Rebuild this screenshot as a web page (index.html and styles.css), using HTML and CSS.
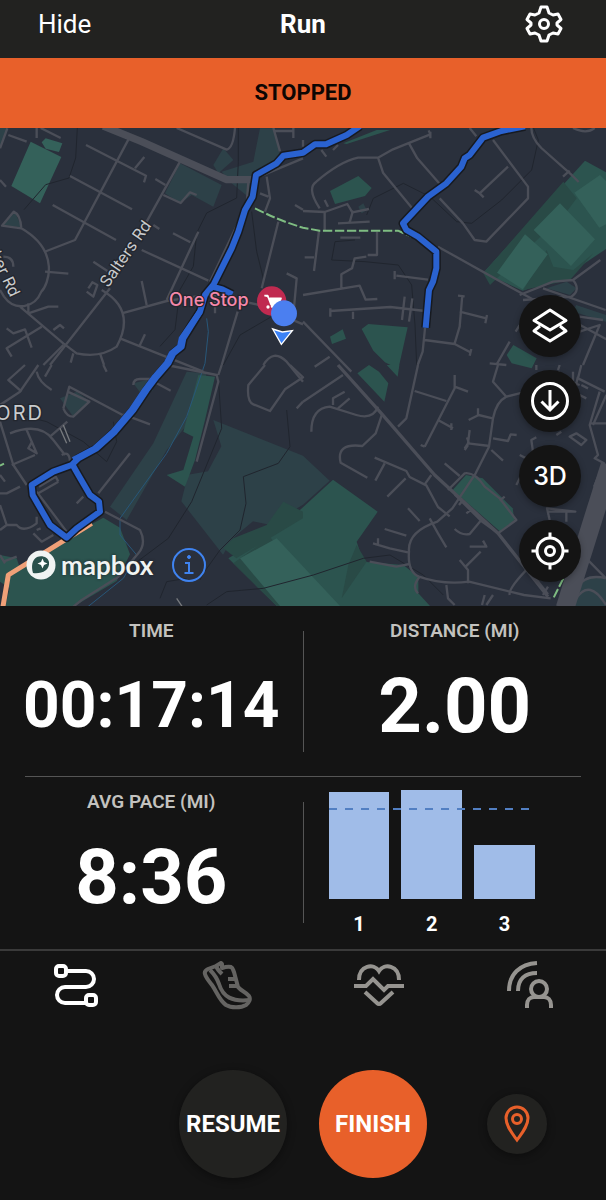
FILE: index.html
```
<!DOCTYPE html>
<html lang="en">
<head>
    <meta charset="UTF-8">
    <meta name="viewport" content="width=device-width, initial-scale=1.0">
    <title>Run</title>
    <link rel="stylesheet" href="styles.css">
</head>
<body>
    <header class="top-bar">
        <button type="button" class="hide-btn">Hide</button>
        <h1>Run</h1>
        <button type="button" class="settings-btn" aria-label="Settings">
            <svg width="48" height="44" viewBox="0 0 48 44" fill="none" stroke="#fff" stroke-width="3" stroke-linejoin="round">
                <path d="M21 5h6l2 6 4 2 5-1 3 5.500-4 3.500v2l4 3.500-3 5.500-5-1-4 2-2 6h-6l-2-6-4-2-5 1-3-5.500 4-3.500v-2l-4-3.500 3-5.500 5 1 4-2z"/>
                <circle cx="24" cy="22" r="4.500"/>
            </svg>
        </button>
    </header>

    <div class="status">STOPPED</div>

    <main class="map">
        <svg class="map-canvas" viewBox="0 9 1818 1434" preserveAspectRatio="xMidYMid slice">
            <!-- parks -->
            <g class="woods">
                <path d="M540 115l125 65-25 65-65-35-35 25-45-30zM640 120l30-50 30 35-45 40zM665 140l95-30 20-100h45l15 80-80 70-10 60-55-45z"/>
                <path d="M0 9h25L0 70zM10 300l35-38 20 45zM560 740l60 5-40 130-80 100-120 210-50-40 130-190z"/>
                <path d="M640 885l269 107 80 75-80 72-100 60-50-10-60 50-30 50-125-160 20-80 60-10 40-75z"/>
                <path d="M180 820l50-20 40 30-50 45zM400 775l40-10 20 30-30 20zM1075 245l15-10 10 20-15 10zM1640 490l60-20 30 20-20 20zM1720 560l98 30v-20l-90-30zM1700 1443l30-70 40-20 48 10v80z"/>
            </g>
            <g class="park">
                <path d="M990 198l85-45 40 36-20 24-90 24zM1085 612l20-15 118 10-28 125-40-20-35-35zM990 635l38-22 10 28-42 16zM1030 55l100-40h40l-130 42z"/>
                <path d="M1755 107l63 35v230l-120 80-130 45-118-54z"/>
                <path d="M1520 690l20-30 70 40-15 30-60-15zM1072 745l35-25 30 20 28 35-12 55zM1160 720h38l-5 35z"/>
                <path d="M1358 1095l40-45 50 10 90 90 5 35-42 35z"/>
                <path d="M595 750l50 5-30 130-30 120-30 80-55-35 50-15 30-100-30-15z"/>
                <path d="M0 1290l50 10 10 30-30 60-30-20zM60 1330l140-92 110-60 50 30 30 80-40 80-135 80H15l20-85z"/>
                <path d="M685 1300l155-90 159-146 134 96-63 90 20 60 120 10 45 35 0 50 35 38H830z"/>
            </g>
            <g class="trees">
                <path d="M670 1270l30-30 100-40 50-70 59 30v20l-200 120zM1045 1320l25-60 30 50-75 110zM700 1315l110-80 160 208H830z"/>
                <path d="M1690 170l40 50-30 40-230 220-20-35zM1640 375l20 50 60 10 60-50-70 80-140 30z"/>
            </g>
            <g class="pitch">
                <path d="M92 50l92 46-64 139-86-52zM125 52l12-12 50 15-10 26-40-10z"/>
                <path d="M1575 328l68 60-75 105-77-50zM1680 235l105 108-72 80-112-108zM1800 150l18 18v130l-20 10-75-105z"/>
                <path d="M720 1300l110-60 190 203H840z"/>
            </g>

            <!-- paths and streams -->
            <g class="trail">
                <path d="M232 9l-5 90-20 60-70 20-65 75M715 9l0 100-5 110-90 45-30 60-10 100-40 70-15 120-45 50M755 260l15 120 20 80M840 560l-120 70-50 90M1100 270l20-50 90-45 80 40 80 75 45 5 90-70 90-90 20-90-30-75M1065 345l-60 5-10 55 100 5 100 10 40 60 10 120 5 120"/>
                <path d="M860 855l10 110-35 50-105 40 8 80-18 80-60 60-50 70-10 20M655 760l10 150-90 220-70 110-160 120M480 1420l20-50 60-10M620 1440l60-40 110-10 150-40 150-50 80-10 100 60 60 60M60 870l80 20 110 60 70 60 30-60-10-60"/>
            </g>
            <path class="stream" d="M620 580l5 40-10 95-55 160-60 110-140 195 0 50 50 60-40 70-150 120"/>

            <!-- north west -->
            <g class="road">
                <path d="M387 40L225 345l-93 36M540 110L440 290M330 490L150 720M258 60l180 92-6 20M405 130l28-34M210 153l186 100M158 240l190 105M466 162l30 18M490 210l52 24 28-32 20 8M460 300l18 12M425 375l200 92M519 325l52 27M595 320l-95 205M280 410l42 28"/>
                <path d="M64 310c120 70 80 170 60 190-20 50-80 60-112 15L0 495M64 310l-58-8 35-42q20 8 23 50M135 440l70 6M60 545l130 110 40 30q70 15 120-20 60-110-45-170M365 565l135-37 130-20 140 30 139 60M360 640l250 100M440 540l-15-72M435 628l-18 38M300 685l12 35M220 685l-8 28M190 660l-60 60M125 605L20 670l15 25M20 610l20 15 35-12 20 55M85 565l60-20h30M160 615l20-15 12 10M260 500l20 15 12-35-15-8-12 18M85 535v30"/>
                <path d="M25 30l55 20M0 70l22-60M0 165l18 20M110 9v30M122 9l60 30M10 395q30 0 30 30M530 9l150 65q20-5 25-65M820 9l20 70M800 155l10 65-15 40M745 170L740 240 630 470M880 9v30M820 18h60M885 240l24 14M835 290L785 490M860 445l30 15-10 110M713 560L665 720M645 530v35M780 205l25 10M790 720q30-50 70-10l49 60"/>
            </g>
            <path class="road main" d="M310 3L425 50l255 114h85"/>
            <path class="road" d="M765 160l144-60"/>

            <!-- north east -->
            <g class="road" transform="translate(909 0)">
                <path d="M0 258l65 3 68-24 15 25 50-10M50 250Q10 190 40 170 110 110 165 98l60 0 45-25 112-45-5-12M382 20v20M225 98l15 45 90 110M318 55l25 45 70 80M410 220l70 75 35 50 35 5 125-130v-35L570 45M615 125l-85 80-15-10M530 205l12 12M500 9l20 25M685 9q0 30 30 60l90 80 22 22M780 155l20-18"/>
                <path d="M405 365l215 120 290 158M65 260v55M48 318l-15 120M5 397h28M105 295l95-5M140 292l10-35M65 225l10 20M112 338h60M222 320v70h-28M190 395l-35 5-8 30-32 18v45M0 510l170-28 18 42 35-2M280 452l95 12M275 438v25M82 558l180-12 105 12M82 550v25M150 560v22M305 515l-8 70M328 520l-10 70M478 510l-8 95-15 50M465 512l20 2M470 560l80 20M552 570l-5 25M365 645l90 12 47 25M505 672l-5 20M367 600l-8 80-15 40"/>
                <path d="M0 590l145 150M80 695l-45 30M0 45v20M105 60l-15 15M55 75l15 20M650 510l100-40 60-5 82-60M720 490l188 65M810 465q25 30-5 50L660 525M810 9q40 20 65 0M830 575l70 10M620 650l-40 70M560 715l50 5M650 600l-12 20M830 620l60-20-50 120"/>
            </g>

            <!-- south west -->
            <g class="road" transform="translate(0 720)">
                <path d="M115 0L60 80 0 120M65 80L25 45 75 0M0 170l40 130 40 60M30 205q90-35 130 20l35 45M80 195l30 70-25-15 10-18M150 215l52-45M35 300l70-30M0 330l15 20M0 385h20l40-20M110 20q5 30 45 55M155 0l-20 35M310 0l10 20M190 130l18-65 160 85 0 0M190 130q10 25 30 25l48-45-65-30M370 148l80 30M470 55l42 22M400 60q0-18 20-18h40M390 265l-95 120M250 395l-20 20M500 0l150 30 5 20-65 240M655 30l10-30"/>
                <path d="M315 440l105 55q20 40-5 70l-60 70-110 70-25 20M110 380l90 120M175 350l-60 35M175 350l-8-15-50 30M0 420l20 60-20 15M20 480l30 0q20 25 60-5v-20M100 505l25 25 35-20M0 570l15 25M10 590l40-15M110 495l12-5M185 270q25-15 25 25"/>
                <path d="M795 0l-50 60q-5 50 15 58l50 20 45-65 54-36L870 0M890 130l19-20"/>
            </g>
            <path class="footway" d="M180 910l20 45M190 900l20 50M530 1420l20 30"/>
            <path class="a-road" d="M275 1195L25 1350 8 1450"/>

            <!-- south east -->
            <g class="road" transform="translate(909 720)">
                <path class="wide" d="M105 0l130 145 160 185 190 175 150 190"/>
                <path d="M345 0l-35 160-25 25M335 78l95 30M455 30l0 40-90 175M365 245l-12-5M455 65l40 15M405 165l45 25M445 175v20M585 0l-15 50 40 45q-30 15-40 65l-12 85-40 80-70 105-45 40q-90 30-85 90-5 60 30 75 70 25 150 15l165 40 80 10"/>
                <path d="M610 95l60-15M497 165l30-15 42 10M525 130v22M485 250l12-18-5-15M500 195l-5 40 65 8M495 240l-10 15M570 220l45 8 8-20 18 2M565 255l35 32M425 295l45 38M385 330l-20 28M215 278l95 40 10 18 50 25 35 65 35 28M245 295l-28 52M308 340l-55 55M435 375l50-50q30-5 60 40l45 35 50 65-55 40M455 388l80 80 55 40M480 405l-12 15M510 430l-20 15M535 465l-35 42q-25 5-45-15M605 395l-15 12"/>
                <path d="M0 110L120 30M25 200q0-70 55-75l80 25q50 15 65-25M90 120v-20l35-20M105 130l35-30M238 145l-20 60-40 38q-80-10-65 50l80 45M315 430l35 38M380 460l25 45 25 42M245 492l65 20M210 535l50 15 55 12M225 520v20M200 590l80 15 40-8M495 655v-40l-25-30M488 605l45-45M500 545l50 0-10-18M430 660l5 40 20 20M350 635q-25 30-5 50M570 690l-20 30M545 690l-8 30M620 690q-5-20 60-85M690 630l45 58M720 690l15-25"/>
                <path d="M700 0v15M770 0l-5 15M835 0l-10 40 80 40M890 80l-30 100 25 90-10 10 28 15-30 70M910 90l-40 90M860 175h49M800 215l20-10 30 20-15 15zM800 50l30 10M640 360l20-40M690 260l-5-35 15-8M740 465l-8-35 85 10-80 0M790 440v30M650 270l20 10M820 700q40-60 89 20M810 700q20-80 99-60M850 580l59 60M760 210l15-10"/>
                <path d="M730 60q10-30 40-40M810 20v100M825 35l-15 60M835 60l20 10M830 90l20 10"/>
            </g>
            <path class="road motorway" d="M1830 1020l-135 430"/>
            <path class="cycle" d="M765 250q80 40 144 58l50 9h235l40 18M0 1022l12-6M1690 1360l-30 60"/>

            <!-- recorded route, dark edge first and blue line over it -->
            <g class="route">
                <path id="route" d="M1080 3l-40 27-62 28h-33l-36 25-59 9-20 23-62 35-10 65-23 40-20 65-20 50-55 110-25 30-15 50-25 40-25 40-5 25-25 20-15 30-35 40-30 40-40 60-55 65-55 50-55 30-20 20-55 20-65 40 3 30 52 90 50 38 30-28 70-50-3-30-27-20-35-60-20-35M637 485l30 8 30 15M1575 4l-71 14-55 20-40 52-15 10-10 25-45 50-55 40-75 80 10 20 35 20 55 45v50l-10 40-12 25-10 113"/>
            </g>
            <use href="#route" class="route-line"/>
            <!-- stretch that was run twice -->
            <path class="route-line" d="M600 560l-55 80-5 25-25 20-15 30-35 40-30 40-40 60-55 65-55 50-65 35" />

            <g class="place">
                <text x="324" y="490" transform="rotate(-55 324 490)">Salters Rd</text>
                <text x="-30" y="388" transform="rotate(65 -30 388)">ker Rd</text>
                <text class="district" x="-14" y="886">ORD</text>
                <text class="shop" x="507" y="543">One Stop</text>
            </g>

            <circle cx="815" cy="528" r="44" fill="#c02a50"/>
            <path d="M793 512h10l10 26h22l8-18h-34M815 538v8h22" fill="#fff" stroke="#fff" stroke-width="5" stroke-linejoin="round"/>
            <circle cx="804" cy="546" r="5" fill="#fff"/>
            <circle cx="852" cy="565" r="39" fill="#4b7ff0"/>
            <path d="M818 612l29 9 30-4-33 41z" fill="#3b82f6" stroke="#fff" stroke-width="4"/>
        </svg>

        <div class="attribution">
            <a href="#" class="mapbox">
                <svg width="30" height="30" viewBox="0 0 30 30">
                    <circle cx="15" cy="15" r="14.500" fill="#f0f3f2"/>
                    <path d="M7 23c-2-7-1-13 4-16 5-2 11 0 12 5 1 9-8 12-16 11z" fill="#29504b"/>
                    <path d="M16.500 8.500l1.500 3.500 3.500 1.500-3.500 1.500-1.500 3.500-1.500-3.500-3.500-1.500 3.500-1.500z" fill="#fff"/>
                </svg>
                mapbox
            </a>
            <button type="button" aria-label="Map information">
                <svg width="34" height="34" viewBox="0 0 34 34" fill="none" stroke="#3f83f0" stroke-width="2">
                    <circle cx="17" cy="17" r="16"/>
                    <path d="M13 15h4v10M12.500 25h9"/>
                    <circle cx="17" cy="9" r="1.500" fill="#3f83f0" stroke-width="1"/>
                </svg>
            </button>
        </div>

        <div class="map-controls">
            <button type="button" aria-label="Map layers">
                <svg width="40" height="40" viewBox="0 0 40 40" fill="none" stroke="#fff" stroke-width="3" stroke-linejoin="round">
                    <path d="M20 4l16 10.500L20 24 4 14.500zM10 20l-6 5 16 10 16-10-6-5"/>
                </svg>
            </button>
            <button type="button" aria-label="Download map">
                <svg width="40" height="40" viewBox="0 0 40 40" fill="none" stroke="#fff" stroke-width="3">
                    <circle cx="20" cy="20" r="17.500"/>
                    <path d="M20 9v20M11.500 20.500L20 29l8.500-8.500"/>
                </svg>
            </button>
            <button type="button">3D</button>
            <button type="button" aria-label="Center on my location">
                <svg width="40" height="40" viewBox="0 0 40 40" fill="none" stroke="#fff" stroke-width="3">
                    <circle cx="20" cy="20" r="13"/>
                    <circle cx="20" cy="20" r="4.500"/>
                    <path d="M20 1.500V7M20 33v5.500M1.500 20H7M33 20h5.500"/>
                </svg>
            </button>
        </div>
    </main>

    <section class="stats">
        <div class="stat-row">
            <div class="stat">
                <h2>TIME</h2>
                <p class="value time">00:17:14</p>
            </div>
            <div class="divider"></div>
            <div class="stat">
                <h2>DISTANCE (MI)</h2>
                <p class="value">2.00</p>
            </div>
        </div>
        <hr>
        <div class="stat-row">
            <div class="stat">
                <h2>AVG PACE (MI)</h2>
                <p class="value">8:36</p>
            </div>
            <div class="divider"></div>
            <div class="splits">
                <div class="bars">
                    <div class="bar" style="height: 98%"></div>
                    <div class="bar" style="height: 100%"></div>
                    <div class="bar" style="height: 50%"></div>
                    <div class="average"></div>
                </div>
                <div class="split-labels">
                    <span>1</span>
                    <span>2</span>
                    <span>3</span>
                </div>
            </div>
        </div>
    </section>

    <nav class="tabs">
        <button type="button" class="active" aria-label="Route">
            <svg width="50" height="50" viewBox="0 0 50 50" fill="none" stroke="currentColor" stroke-width="4">
                <rect x="5" y="5" width="10" height="10" rx="3"/>
                <rect x="35" y="34" width="10" height="10" rx="3"/>
                <path d="M15 10h20a8 8 0 0 1 0 16H14a8 8 0 0 0 0 16h21"/>
            </svg>
        </button>
        <button type="button" class="shoe" aria-label="Shoes">
            <svg width="50" height="50" viewBox="0 0 50 50" fill="none" stroke="currentColor" stroke-width="4" stroke-linejoin="round">
                <path d="M3 13c-1-3 1-4 3-5l8-3 5-3 1 1v4c3-1 6-2 9-1 2 1 2 3 3 5l4 15c3 4 8 5 11 9 2 3 0 7-3 9-5 3-15 3-20 0-7-5-9-13-14-20-3-4-6-7-7-11z"/>
                <path d="M8 9c4 4 7 8 9 14 4 13 13 18 31 16M14 5c1 3 3 5 6 8M26 18h8M27 25h9"/>
            </svg>
        </button>
        <button type="button" aria-label="Heart rate">
            <svg width="50" height="50" viewBox="0 0 50 50" fill="none" stroke="currentColor" stroke-width="4">
                <path d="M5 19C5 4 20 2 25 10c5-8 20-6 20 9M0 25h12l7-7 11 11 4-4h16M11 31l12 11q2 2 4 0l12-11"/>
            </svg>
        </button>
        <button type="button" aria-label="Live tracking">
            <svg width="50" height="50" viewBox="0 0 50 50" fill="none" stroke="currentColor" stroke-width="4">
                <path d="M4 30C4 13 15 3 32 2M13 30c0-12 7-18 19-18M22 47v-3c0-5 3-8 7-8h10c4 0 7 3 7 8v3"/>
                <circle cx="34" cy="28" r="8"/>
            </svg>
        </button>
    </nav>

    <footer class="actions">
        <div class="main-actions">
            <button type="button" class="resume">RESUME</button>
            <button type="button" class="finish">FINISH</button>
        </div>
        <button type="button" class="pin" aria-label="Drop pin">
            <svg width="30" height="38" viewBox="0 0 30 38" fill="none" stroke="#e8602a" stroke-width="3">
                <path d="M15 35C10 28 4 21 4 13a11 11 0 0 1 22 0c0 8-6 15-11 22z"/>
                <circle cx="15" cy="14" r="4.500"/>
            </svg>
        </button>
    </footer>
</body>
</html>
```
FILE: styles.css
```
* {
    box-sizing: border-box;
}
body {
    display: flex;
    flex-direction: column;
    min-height: 100vh;
    margin: 0;
    font-family: Roboto, "Liberation Sans", sans-serif;
    background-color: #141414;
    color: #fff;
}
h1, h2, p {
    margin: 0;
}
button {
    padding: 0;
    border: none;
    background: none;
    color: inherit;
    font-family: inherit;
    cursor: pointer;
}
svg {
    display: block;
}

/* Header */
.top-bar {
    display: grid;
    grid-template-columns: 1fr auto 1fr;
    align-items: center;
    height: 58px;
    padding: 0 38px 10px;
    background-color: #222220;
}
.hide-btn {
    justify-self: start;
    font-size: 26px;
}
.top-bar h1 {
    font-size: 26px;
}
.settings-btn {
    justify-self: end;
}
.status {
    background-color: #e8602a;
    color: #0d0603;
    font-size: 22px;
    font-weight: 700;
    line-height: 70px;
    text-align: center;
}

/* Map */
.map {
    position: relative;
    flex: 1;
    min-height: 400px;
    overflow: hidden;
    background-color: #2a303c;
}
.map-canvas {
    position: absolute;
    width: 100%;
    height: 100%;
}
.woods {
    fill: #2d4148;
}
.park {
    fill: #2c544f;
}
.trees {
    fill: #294a46;
}
.pitch {
    fill: #34615a;
}
.trail, .stream, .road, .footway, .a-road, .cycle, .route-line {
    fill: none;
    stroke-linejoin: round;
}
.trail {
    stroke: #20252e;
    stroke-width: 3;
}
.stream {
    stroke: #285779;
    stroke-width: 3;
}
.road {
    stroke: #4b4e58;
    stroke-width: 7;
}
.road .wide {
    stroke-width: 10;
}
.main {
    stroke-width: 22;
}
.motorway {
    stroke-width: 56;
}
.footway {
    stroke: #777a7e;
    stroke-width: 4;
}
.a-road {
    stroke: #f0a078;
    stroke-width: 15;
}
.cycle {
    stroke: #7fbd82;
    stroke-width: 6;
    stroke-dasharray: 28 8;
}
.route {
    fill: none;
    stroke: #171a20;
    stroke-width: 27;
    stroke-linejoin: round;
}
.route-line {
    stroke: #2a62d0;
    stroke-width: 18;
}
.place {
    fill: #c9cbcd;
    stroke: #22262e;
    stroke-width: 8;
    paint-order: stroke;
    font-family: Inter, sans-serif;
    font-size: 48px;
}
.district {
    font-size: 60px;
    letter-spacing: 6px;
}
.shop {
    fill: #f588aa;
    font-size: 54px;
    font-weight: 500;
}
.attribution {
    position: absolute;
    left: 26px;
    bottom: 24px;
    display: flex;
    align-items: center;
    gap: 19px;
}
.mapbox {
    display: flex;
    align-items: center;
    gap: 5px;
    color: #f0f3f2;
    font-family: Lato, sans-serif;
    font-size: 26px;
    font-weight: 700;
    line-height: 34px;
    text-decoration: none;
    text-shadow: 0 0 3px #1b1f26;
}
.map-controls {
    position: absolute;
    right: 25px;
    bottom: 24px;
    display: flex;
    flex-direction: column;
    gap: 13px;
}
.map-controls button {
    display: grid;
    place-items: center;
    width: 62px;
    height: 62px;
    border-radius: 50%;
    background-color: #141414;
    box-shadow: 0 2px 6px rgba(0, 0, 0, 0.3);
    font-family: Inter, sans-serif;
    font-size: 25px;
    font-weight: 500;
}

/* Stats */
.stats {
    padding-bottom: 2px;
    border-bottom: 2px solid #3a3a3a;
}
.stats hr {
    height: 1px;
    margin: 0 25px;
    border: none;
    background-color: #555;
}
.stat-row {
    display: grid;
    grid-template-columns: minmax(0, 1fr) 1px minmax(0, 1fr);
}
.stat {
    padding: 15px 0 5px;
    text-align: center;
}
.stat h2 {
    color: #c3c2bf;
    font-size: 19px;
    font-weight: 600;
    line-height: 20px;
}
.value {
    font-size: 76px;
    font-weight: 700;
    line-height: 130px;
}
.time {
    font-size: 64px;
}
.divider {
    margin: 25px 0 24px;
    background-color: #555;
}
.splits {
    padding: 13px 71px 0 25px;
}
.bars {
    position: relative;
    display: flex;
    align-items: flex-end;
    gap: 12px;
    height: 109px;
}
.bar {
    flex: 1;
    background-color: #a0bce8;
}
.average {
    position: absolute;
    top: 18px;
    left: 0;
    right: 0;
    height: 2px;
    background: repeating-linear-gradient(to right, #527fc2 0 8px, transparent 8px 16px);
}
.split-labels {
    display: flex;
    gap: 12px;
    padding-top: 15px;
}
.split-labels span {
    flex: 1;
    font-size: 20px;
    font-weight: 700;
    line-height: 20px;
    text-align: center;
}

/* Tabs */
.tabs {
    display: grid;
    grid-template-columns: repeat(4, 1fr);
    height: 69px;
}
.tabs button {
    display: grid;
    place-items: center;
    color: #969490;
}
.tabs .active {
    color: #fff;
}
.tabs .shoe {
    color: #656462;
}

/* Buttons */
.actions {
    display: grid;
    grid-template-columns: 1fr auto 1fr;
    align-items: center;
    padding: 50px 0 22px;
}
.main-actions {
    grid-column: 2;
    display: flex;
    gap: 32px;
}
.main-actions button {
    width: 108px;
    height: 108px;
    border-radius: 50%;
    font-size: 24px;
    font-weight: 700;
}
.resume, .pin {
    background-color: #222220;
    box-shadow: 0 2px 8px rgba(0, 0, 0, 0.4);
}
.finish {
    background-color: #e8602a;
}
.pin {
    display: grid;
    place-items: center;
    justify-self: center;
    width: 60px;
    height: 60px;
    border-radius: 50%;
}
```
